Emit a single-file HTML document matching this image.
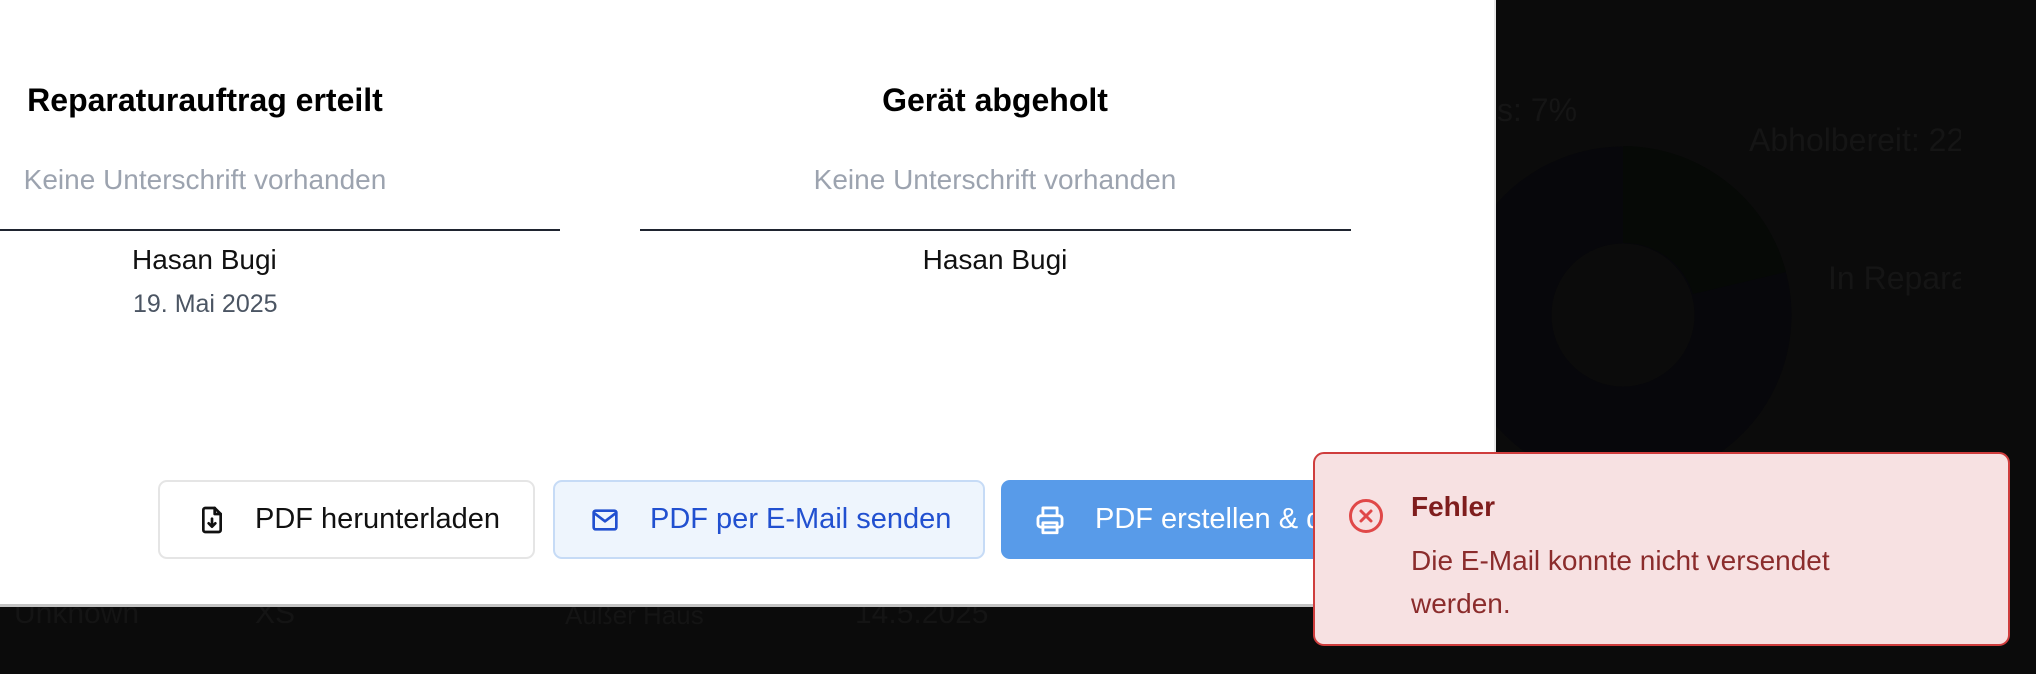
<!DOCTYPE html>
<html><head><meta charset="utf-8"><style>
*{margin:0;padding:0;box-sizing:border-box}
body{width:2036px;height:674px;overflow:hidden;background:#0b0b0b;font-family:"Liberation Sans",sans-serif;position:relative}
.a{position:absolute;white-space:nowrap}
.modal{position:absolute;left:0;top:0;width:1496px;height:607px;background:#fff;border-bottom:3px solid #c4c4c4;border-right:2px solid #e8e8e8}
.t{font-weight:bold;font-size:32px;color:#000;transform:translateX(-50%)}
.k{font-size:28px;color:#9ca3af;transform:translateX(-50%)}
.n{font-size:28px;color:#111}
.btn{position:absolute;top:480px;height:79px;border-radius:9px;display:flex;align-items:center;font-size:29px;white-space:nowrap;overflow:hidden}
.btn svg{flex-shrink:0}
.dk{color:#151515;font-size:32px}
</style></head><body>
<div class="a dk" style="left:1497px;top:92px">s: 7%</div>
<div class="a dk" style="left:1749px;top:122px;width:212px;overflow:hidden">Abholbereit: 22</div>
<div class="a dk" style="left:1828px;top:260px;width:133px;overflow:hidden">In Reparatur</div>
<svg class="a" style="left:1440px;top:140px" width="380" height="380" viewBox="0 0 380 380">
<circle cx="183" cy="175" r="120" fill="none" stroke="#07070b" stroke-width="97"/>
<path d="M183 6 A169 169 0 0 1 346 132 L253 154 A72 72 0 0 0 183 103Z" fill="#060906"/>
</svg>
<div class="a" style="left:14px;top:597px;font-size:30px;color:#141414">Unknown</div>
<div class="a" style="left:255px;top:597px;font-size:30px;color:#141414">XS</div>
<div class="a" style="left:565px;top:600px;font-size:26px;color:#141414">Außer Haus</div>
<div class="a" style="left:855px;top:597px;font-size:30px;color:#141414">14.5.2025</div>
<div class="modal">
<div class="a t" style="left:205px;top:82px">Reparaturauftrag erteilt</div>
<div class="a t" style="left:995px;top:82px">Gerät abgeholt</div>
<div class="a k" style="left:205px;top:164px">Keine Unterschrift vorhanden</div>
<div class="a k" style="left:995px;top:164px">Keine Unterschrift vorhanden</div>
<div class="a" style="left:0;top:229px;width:560px;height:2px;background:#1f2430"></div>
<div class="a" style="left:640px;top:229px;width:711px;height:2px;background:#1f2430"></div>
<div class="a n" style="left:132px;top:244px">Hasan Bugi</div>
<div class="a" style="left:133px;top:290px;font-size:25px;color:#4b5563">19. Mai 2025</div>
<div class="a n" style="left:995px;top:244px;transform:translateX(-50%)">Hasan Bugi</div>
<div class="btn" style="left:158px;width:377px;border:2px solid #e5e5e5;color:#111">
<svg style="margin-left:36px" width="32" height="32" viewBox="0 0 24 24" fill="none" stroke="#111" stroke-width="2" stroke-linecap="round" stroke-linejoin="round"><path d="M14 3H7a1.5 1.5 0 0 0-1.5 1.5v15A1.5 1.5 0 0 0 7 21h10a1.5 1.5 0 0 0 1.5-1.5V7.5z"/><path d="M14 3v4.5h4.5"/><path d="M12 11v6M9.5 14.5 12 17l2.5-2.5"/></svg>
<span style="margin-left:27px">PDF herunterladen</span></div>
<div class="btn" style="left:553px;width:432px;border:2px solid #c6dbf6;background:#eef5fd;color:#2150d0">
<svg style="margin-left:34px" width="32" height="32" viewBox="0 0 24 24" fill="none" stroke="#2150d0" stroke-width="2" stroke-linejoin="round"><rect x="3.5" y="5" width="17" height="14" rx="1.5"/><path d="M3.5 6.5 12 13l8.5-6.5"/></svg>
<span style="margin-left:29px">PDF per E-Mail senden</span></div>
<div class="btn" style="left:1001px;width:340px;background:#589be9;color:#fff">
<svg style="margin-left:32px" width="34" height="34" viewBox="0 0 24 24" fill="none" stroke="#fff" stroke-width="2" stroke-linejoin="round"><path d="M7 9V3.5h10V9"/><rect x="3.5" y="9" width="17" height="8" rx="2"/><rect x="7" y="14" width="10" height="7"/></svg>
<span style="margin-left:28px">PDF erstellen &amp; drucken</span></div>
</div>
<div class="a" style="left:1313px;top:452px;width:697px;height:194px;background:#f7e1e2;border:2px solid #cf3d3d;border-radius:11px">
<svg class="a" style="left:33px;top:44px" width="36" height="36" viewBox="0 0 36 36" fill="none" stroke="#e04848" stroke-width="3" stroke-linecap="round"><circle cx="18" cy="18" r="15.5"/><path d="M13 13l10 10M23 13 13 23"/></svg>
<div class="a" style="left:96px;top:37px;font-size:28px;font-weight:bold;color:#7f1d1d">Fehler</div>
<div class="a" style="left:96px;top:85px;font-size:28px;line-height:43px;color:#8b2c2c;white-space:normal;width:470px">Die E-Mail konnte nicht versendet werden.</div>
</div>
</body></html>
